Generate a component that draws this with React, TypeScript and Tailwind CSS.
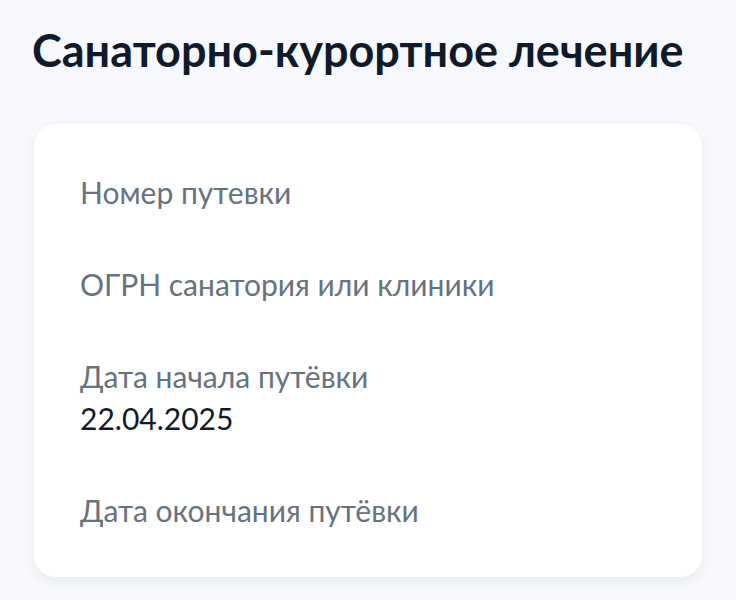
import React from 'react';

interface Field {
  label: string;
  value?: string;
}

const fields: Field[] = [
  { label: 'Номер путевки' },
  { label: 'ОГРН санатория или клиники' },
  { label: 'Дата начала путёвки', value: '22.04.2025' },
  { label: 'Дата окончания путёвки' },
];

export default function App() {
  return (
    <div className="min-h-[600px] w-[736px] bg-[#f7f8fc] font-['Lato',sans-serif]">
      <div className="px-8 pt-[24px]">
        <h1 className="text-[45px] font-bold leading-[52px] text-[#0f1a2a]">Санаторно-курортное лечение</h1>
      </div>

      <div className="mx-[34px] mt-[48px] flex flex-col gap-[50px] rounded-[22px] bg-white px-[46px] pt-[47px] pb-[46px] shadow-[0_4px_12px_rgba(40,60,120,0.08)]">
        {fields.map((f) => (
          <div key={f.label} className="flex flex-col">
            <span className="text-[30px] leading-[42px] text-[#66727f]">{f.label}</span>
            {f.value && <span className="text-[30px] leading-[42px] text-[#0f1a2a]">{f.value}</span>}
          </div>
        ))}
      </div>
    </div>
  );
}
